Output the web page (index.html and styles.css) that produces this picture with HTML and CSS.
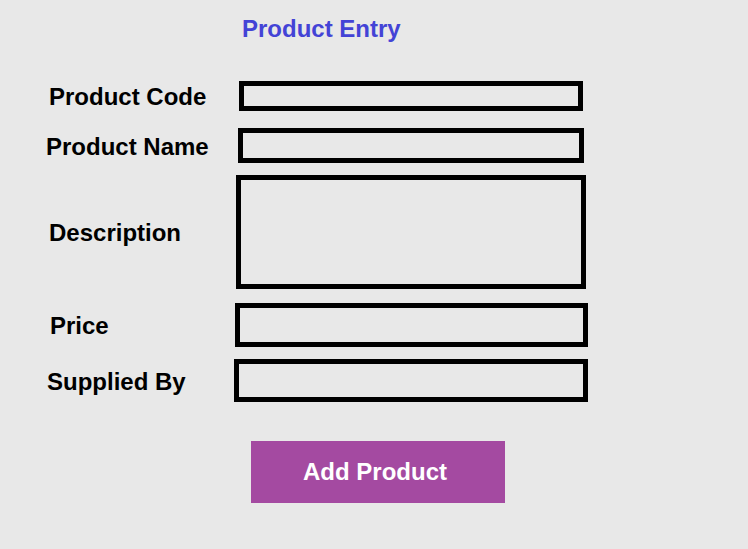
FILE: index.html
```html
<!DOCTYPE html>
<html lang="en">
<head>
<meta charset="utf-8">
<title>Product Entry</title>
<link rel="stylesheet" href="styles.css">
</head>
<body>
<main class="page">
  <h1 class="title">Product Entry</h1>
  <form class="form">
    <div class="row row--code">
      <label class="label label--code" for="code">Product Code</label>
      <div class="field"><input class="box box--code" id="code" type="text"></div>
    </div>
    <div class="row row--name">
      <label class="label label--name" for="name">Product Name</label>
      <div class="field"><input class="box box--name" id="name" type="text"></div>
    </div>
    <div class="row row--desc">
      <label class="label label--desc" for="desc">Description</label>
      <div class="field"><textarea class="box box--desc" id="desc"></textarea></div>
    </div>
    <div class="row row--price">
      <label class="label label--price" for="price">Price</label>
      <div class="field"><input class="box box--price" id="price" type="text"></div>
    </div>
    <div class="row row--supp">
      <label class="label label--supp" for="supp">Supplied By</label>
      <div class="field"><input class="box box--supp" id="supp" type="text"></div>
    </div>
    <div class="actions">
      <button class="button" type="button">Add Product</button>
    </div>
  </form>
</main>
</body>
</html>
```

FILE: styles.css
```css
html, body {
  margin: 0;
  padding: 0;
  background: #e8e8e8;
}

body {
  font-family: "Liberation Sans", Arial, sans-serif;
  color: #000;
  width: 748px;
  height: 549px;
  overflow: hidden;
}

.page {
  display: flex;
  flex-direction: column;
}

.title {
  margin: 15px 0 0 242px;
  font-size: 24px;
  line-height: 28px;
  font-weight: bold;
  color: #4343d6;
}

.form {
  display: flex;
  flex-direction: column;
  margin: 38px 0 0 47px;
}

.row {
  display: flex;
  align-items: center;
}

.row--name { margin-top: 17px; }
.row--desc { margin-top: 12px; }
.row--price { margin-top: 14px; }
.row--supp { margin-top: 12px; }

.label {
  box-sizing: border-box;
  width: 187px;
  padding-top: 2px;
  font-size: 24px;
  line-height: 28px;
  font-weight: bold;
  white-space: nowrap;
}

.label--code { padding-left: 2px; }
.label--name { margin-left: -1px; width: 188px; }
.label--desc { padding-left: 2px; }
.label--price { padding-left: 3px; }
.label--supp { padding-left: 0; }

.field {
  width: 354px;
  display: flex;
  justify-content: center;
}

.box {
  display: block;
  box-sizing: border-box;
  margin: 0;
  padding: 0;
  border: 5px solid #000;
  border-radius: 0;
  background: transparent;
  outline: none;
  resize: none;
  font: inherit;
}

.box--code { width: 344px; height: 30px; }
.box--name { width: 346px; height: 35px; }
.box--desc { width: 350px; height: 114px; }
.box--price { width: 353px; height: 44px; }
.box--supp { width: 354px; height: 43px; }

.actions {
  display: flex;
  margin: 39px 0 0 204px;
}

.button {
  width: 254px;
  height: 62px;
  border: none;
  border-radius: 0;
  padding: 0 6px 0 0;
  background: #a44aa1;
  color: #fff;
  font-family: "Liberation Sans", Arial, sans-serif;
  font-size: 24px;
  font-weight: bold;
  cursor: pointer;
}
```
